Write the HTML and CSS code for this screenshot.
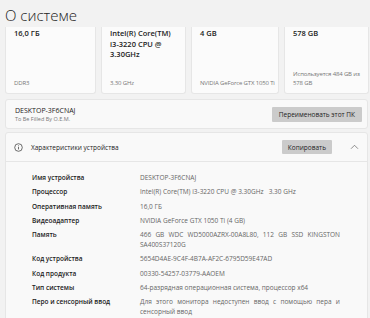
FILE: index.html
```html
<!DOCTYPE html>
<html>
<head>
    <meta charset="utf-8">
    <link rel="stylesheet" href="styles.css">
</head>
<body>
<div class="page">
    <h1 class="page_title">О системе</h1>

    <div class="spec_cards">
        <div class="spec_card">
            <div class="spec_value">16,0 ГБ</div>
            <div class="spec_note">DDR3</div>
        </div>
        <div class="spec_card">
            <div class="spec_value">Intel(R) Core(TM) i3-3220 CPU @ 3.30GHz</div>
            <div class="spec_note">3.30 GHz</div>
        </div>
        <div class="spec_card">
            <div class="spec_value">4 GB</div>
            <div class="spec_note nowrap">NVIDIA GeForce GTX 1050 Ti</div>
        </div>
        <div class="spec_card">
            <div class="spec_value">578 GB</div>
            <div class="spec_note">Используется 484 GB из 578 GB</div>
        </div>
    </div>

    <div class="pc_card">
        <div class="pc_name">
            <div class="pc_title">DESKTOP-3F6CNAJ</div>
            <div class="pc_sub">To Be Filled By O.E.M.</div>
        </div>
        <button type="button" class="btn">Переименовать этот ПК</button>
    </div>

    <div class="device_card">
        <div class="device_head">
            <svg class="info_icon" width="9" height="9" viewBox="0 0 18 18">
                <circle cx="9" cy="9" r="7.6" fill="none" stroke="#333" stroke-width="1.4"/>
                <rect x="8.3" y="7.6" width="1.4" height="5.2" fill="#333"/>
                <circle cx="9" cy="5.4" r="0.9" fill="#333"/>
            </svg>
            <span class="device_title">Характеристики устройства</span>
            <button type="button" class="btn btn_copy">Копировать</button>
            <svg class="chevron" width="9" height="6" viewBox="0 0 18 12">
                <path d="M2 9.5 L9 2.5 L16 9.5" fill="none" stroke="#555" stroke-width="1.3"/>
            </svg>
        </div>
        <div class="device_body">
            <div class="row"><div class="label">Имя устройства</div><div class="value">DESKTOP-3F6CNAJ</div></div>
            <div class="row"><div class="label">Процессор</div><div class="value">Intel(R) Core(TM) i3-3220 CPU @ 3.30GHz&nbsp;&nbsp;&nbsp;3.30 GHz</div></div>
            <div class="row"><div class="label">Оперативная память</div><div class="value">16,0 ГБ</div></div>
            <div class="row"><div class="label">Видеоадаптер</div><div class="value">NVIDIA GeForce GTX 1050 Ti (4 GB)</div></div>
            <div class="row"><div class="label">Память</div><div class="value">466 GB WDC WD5000AZRX-00A8L80, 112 GB SSD KINGSTON SA400S37120G</div></div>
            <div class="row"><div class="label">Код устройства</div><div class="value">5654D4AE-9C4F-4B7A-AF2C-6795D59E47AD</div></div>
            <div class="row"><div class="label">Код продукта</div><div class="value">00330-54257-03779-AAOEM</div></div>
            <div class="row"><div class="label">Тип системы</div><div class="value">64-разрядная операционная система, процессор x64</div></div>
            <div class="row"><div class="label">Перо и сенсорный ввод</div><div class="value">Для этого монитора недоступен ввод с помощью пера и сенсорный ввод</div></div>
        </div>
    </div>
</div>
</body>
</html>
```

FILE: styles.css
```css
html, body {
    margin: 0;
    padding: 0;
    background-color: #f2f2f2;
    font-family: "Open Sans", "Noto Sans", sans-serif;
    color: #1b1b1b;
}

.page {
    padding: 0 2px 0 5px;
}

.page_title {
    margin: 0;
    padding-top: 5px;
    height: 22px;
    font-size: 15px;
    font-weight: 300;
    line-height: 20px;
    color: #222;
}

.spec_cards {
    display: grid;
    grid-template-columns: 91px 85px 88px 85px;
    gap: 5px;
}

.spec_card {
    display: flex;
    flex-direction: column;
    justify-content: space-between;
    height: 67px;
    box-sizing: border-box;
    padding: 1px 4px 5px 8px;
    background-color: #fbfbfb;
    border: 1px solid #e6e6e6;
    border-top: none;
    border-radius: 0 0 3px 3px;
}

.spec_value {
    font-size: 7.5px;
    font-weight: 600;
    line-height: 10.5px;
    color: #222;
}

.spec_note {
    font-size: 6px;
    line-height: 9px;
    color: #777;
    letter-spacing: -0.15px;
}

.spec_note.nowrap {
    white-space: nowrap;
}

.pc_card {
    display: flex;
    align-items: center;
    justify-content: space-between;
    height: 30px;
    box-sizing: border-box;
    margin-top: 5px;
    padding: 0 5px 0 9px;
    background-color: #f9f9f9;
    border: 1px solid #e6e6e6;
    border-radius: 3px;
}

.pc_title {
    font-size: 7px;
    line-height: 9px;
    color: #222;
}

.pc_sub {
    font-size: 5.5px;
    line-height: 8px;
    color: #777;
}

.btn {
    height: 15px;
    padding: 0 7px;
    border: none;
    border-radius: 1px;
    background-color: #cbcbcb;
    font-family: inherit;
    font-size: 6.5px;
    color: #222;
}

.device_card {
    margin-top: 3px;
    background-color: #f9f9f9;
    border: 1px solid #e6e6e6;
    border-radius: 3px;
}

.device_head {
    display: flex;
    align-items: center;
    height: 28px;
    padding: 0 8px 0 8px;
    border-bottom: 1px solid #e6e6e6;
}

.info_icon {
    margin-right: 8px;
}

.device_title {
    flex: 1;
    font-size: 6.5px;
    color: #222;
}

.btn_copy {
    height: 14px;
    padding: 0 6px;
    margin-right: 18px;
}

.device_body {
    padding: 11px 27px 4px 26px;
}

.row {
    display: flex;
    margin-bottom: 4.3px;
    font-size: 6.5px;
    line-height: 10px;
}

.label {
    width: 108px;
    flex-shrink: 0;
    font-weight: 600;
    color: #222;
}

.value {
    flex: 1;
    text-align: justify;
    color: #666;
}
```
